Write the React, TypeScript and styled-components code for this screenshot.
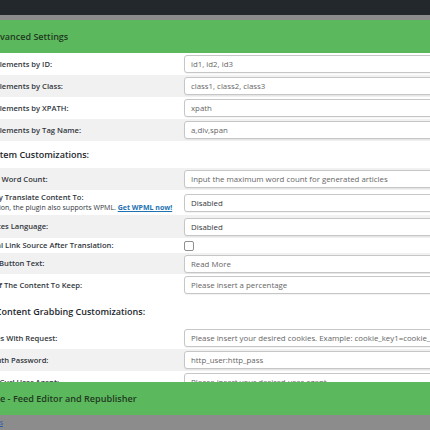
import React from "react";
import styled, { createGlobalStyle } from "styled-components";

const Global = createGlobalStyle`
  html, body { margin: 0; padding: 0; overflow: hidden; }
  body { background: #8c8c8c; font-family: "Open Sans", "Liberation Sans", sans-serif; width: 430px; height: 430px; }
`;

const TopBar = styled.div`
  height: 15px;
  background: #23282d;
`;

const Panel = styled.div`
  margin-top: 5px;
  width: 560px;
  display: flex;
  flex-direction: column;
`;

const GreenBar = styled.div<{ $size?: number }>`
  height: 33px;
  background: #5cb85c;
  display: flex;
  align-items: center;
  font-size: ${(p) => p.$size ?? 9}px;
  font-weight: 600;
  color: #1f3a22;
`;

const Shifted = styled.span<{ $shift: number }>`
  margin-left: ${(p) => p.$shift}px;
  white-space: nowrap;
`;

const Body = styled.div`
  height: 329px;
  overflow: hidden;
  background: #fff;
  display: flex;
  flex-direction: column;
`;

const Row = styled.div<{ $alt?: boolean; $h?: number }>`
  display: grid;
  grid-template-columns: 184px 1fr;
  height: ${(p) => p.$h ?? 22}px;
  background: ${(p) => (p.$alt ? "#f1f1f1" : "#ffffff")};
  align-items: center;
  flex: none;
`;

const Label = styled.div`
  font-size: 7.6px;
  font-weight: 600;
  color: #32373c;
  display: flex;
  flex-direction: column;
  line-height: 10.5px;
  overflow: hidden;
`;

const Note = styled.span<{ $shift: number }>`
  margin-left: ${(p) => p.$shift}px;
  white-space: nowrap;
  font-weight: 400;
  font-size: 7px;
`;

const Link = styled.a`
  color: #2271b1;
  font-weight: 700;
  text-decoration: underline;
`;

const Field = styled.div`
  height: 18px;
  border: 1px solid #c6c6c6;
  border-radius: 3px;
  box-sizing: border-box;
  background: #fff;
  display: flex;
  align-items: center;
  padding-left: 6px;
  font-size: 7.85px;
  color: #666;
  white-space: nowrap;
  overflow: hidden;
  box-shadow: 0 1px 1px rgba(0, 0, 0, 0.05);
`;

const SelectField = styled(Field)`
  color: #32373c;
`;

const Checkbox = styled.div`
  width: 10px;
  height: 10px;
  border: 1px solid #8c8f94;
  border-radius: 2px;
  box-sizing: border-box;
  background: #fff;
`;

const SectionTitle = styled.div<{ $h: number }>`
  height: ${(p) => p.$h}px;
  flex: none;
  display: flex;
  align-items: center;
  font-size: 9px;
  font-weight: 600;
  color: #23282d;
`;

const Below = styled.div`
  height: 15px;
  display: flex;
  align-items: center;
  font-size: 7px;
`;

const SmallLink = styled.a`
  color: #2a5fa8;
  text-decoration: underline;
  margin-left: -13px;
`;

type R = { label: string; shift: number; value: string; kind?: "input" | "select" | "check"; alt?: boolean; h?: number; note?: boolean };

const group1: R[] = [
  { label: "Elements by ID:", shift: -4.5, value: "id1, id2, id3" },
  { label: "Elements by Class:", shift: -4.5, value: "class1, class2, class3", alt: true },
  { label: "Elements by XPATH:", shift: -4.5, value: "xpath" },
  { label: "Elements by Tag Name:", shift: -4.5, value: "a,div,span", alt: true },
];

const group2: R[] = [
  { label: "Max Word Count:", shift: -16, value: "Input the maximum word count for generated articles", alt: true },
  { label: "Automatically Translate Content To:", shift: -48, value: "Disabled", kind: "select", h: 25, note: true },
  { label: "Sources Language:", shift: -20, value: "Disabled", kind: "select", alt: true, h: 23 },
  { label: "Original Link Source After Translation:", shift: -26, value: "", kind: "check", h: 15 },
  { label: "Read More Button Text:", shift: -42.5, value: "Read More", alt: true, h: 21 },
  { label: "Percentage Of The Content To Keep:", shift: -50, value: "Please insert a percentage" },
];

const group3: R[] = [
  { label: "Use Cookies With Request:", shift: -40, value: "Please insert your desired cookies. Example: cookie_key1=cookie_value1; cookie_key2=cookie_value2" },
  { label: "HTTP Auth Password:", shift: -29.5, value: "http_user:http_pass", alt: true },
  { label: "Set Curl User Agent:", shift: -14, value: "Please insert your desired user agent" },
];

function Rows({ rows }: { rows: R[] }) {
  return (
    <>
      {rows.map((r) => (
        <Row key={r.label} $alt={r.alt} $h={r.h}>
          <Label>
            <Shifted $shift={r.shift}>{r.label}</Shifted>
            {r.note && (
              <Note $shift={-59}>
                If you use this option, the plugin also supports WPML. <Link href="#">Get WPML now!</Link>
              </Note>
            )}
          </Label>
          <div>
            {r.kind === "check" ? (
              <Checkbox />
            ) : r.kind === "select" ? (
              <SelectField>{r.value}</SelectField>
            ) : (
              <Field>{r.value}</Field>
            )}
          </div>
        </Row>
      ))}
    </>
  );
}

export default function App() {
  return (
    <>
      <Global />
      <TopBar />
      <Panel>
        <GreenBar>
          <Shifted $shift={-11.5}>Advanced Settings</Shifted>
        </GreenBar>
        <Body>
          <Rows rows={group1} />
          <SectionTitle $h={27}>
            <Shifted $shift={-3}>Item Customizations:</Shifted>
          </SectionTitle>
          <Rows rows={group2} />
          <SectionTitle $h={31}>
            <Shifted $shift={-22}>Full Content Grabbing Customizations:</Shifted>
          </SectionTitle>
          <Rows rows={group3} />
        </Body>
        <GreenBar $size={9.1}>
          <Shifted $shift={0}>e - Feed Editor and Republisher</Shifted>
        </GreenBar>
      </Panel>
      <Below>
        <SmallLink href="#">Docs</SmallLink>
      </Below>
    </>
  );
}
